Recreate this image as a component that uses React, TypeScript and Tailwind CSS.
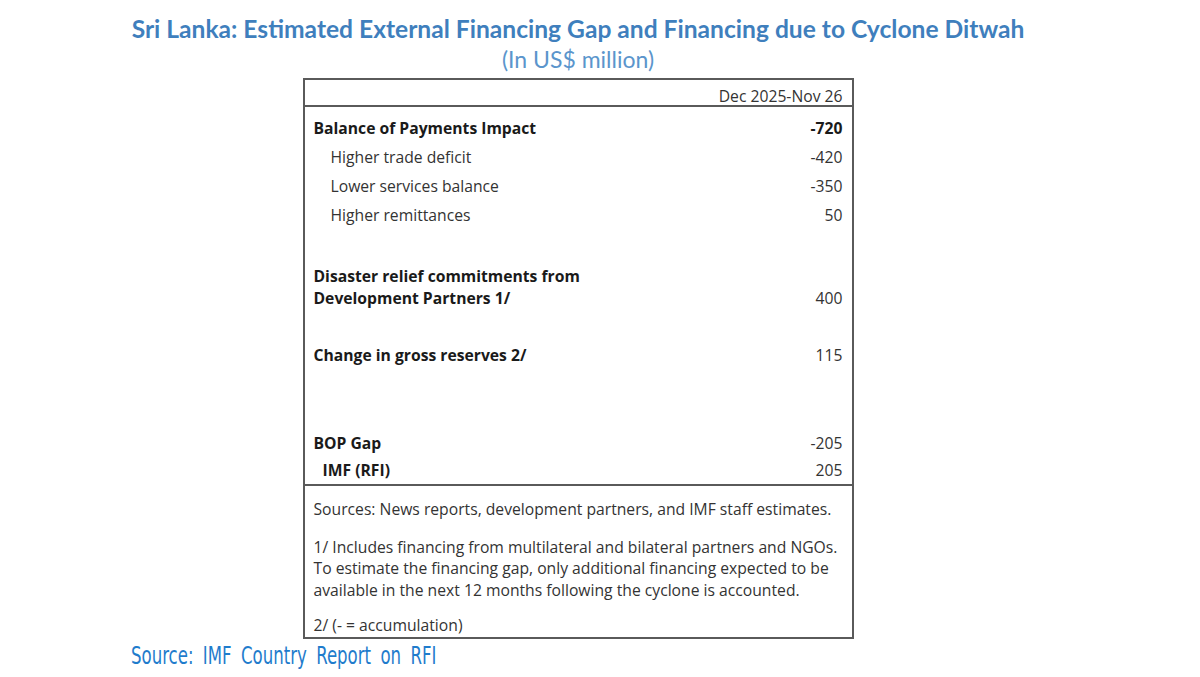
const rows = [
  { label: "Higher trade deficit", value: "-420" },
  { label: "Lower services balance", value: "-350" },
  { label: "Higher remittances", value: "50" },
];

const bodyFont = { fontFamily: '"Open Sans", "Noto Sans", sans-serif' };
const titleFont = { fontFamily: 'Lato, "Liberation Sans", sans-serif' };

export default function App() {
  return (
    <div className="w-[1200px] h-[677px] bg-white overflow-hidden relative">
      <div className="w-[1156px] flex flex-col items-center">
        <h1 className="mt-[13px] text-[24.6px] leading-[31px] font-bold text-[#3f7fbd] whitespace-nowrap" style={titleFont}>
          Sri Lanka: Estimated External Financing Gap and Financing due to Cyclone Ditwah
        </h1>
        <p className="text-[23px] leading-[30px] text-[#5b95cc]" style={titleFont}>
          (In US$ million)
        </p>

        <div
          className="mt-[4px] w-[551px] h-[561px] border-2 border-[#5a5a5a] flex flex-col text-[15.7px] text-[#1a1a1a]"
          style={bodyFont}
        >
          <div className="h-[27px] border-b-2 border-[#5a5a5a] flex items-end justify-end pr-[9px] leading-[18px] text-[#333]">
            Dec 2025-Nov 26
          </div>

          <div className="mt-[7px] px-[9px]">
            <div className="h-[29px] flex items-center justify-between font-bold">
              <span>Balance of Payments Impact</span>
              <span>-720</span>
            </div>
            {rows.map((r) => (
              <div key={r.label} className="h-[29px] flex items-center justify-between text-[#333]">
                <span className="pl-[17px]">{r.label}</span>
                <span>{r.value}</span>
              </div>
            ))}

            <div className="mt-[35px] flex items-end justify-between leading-[22px]">
              <span className="font-bold">
                Disaster relief commitments from
                <br />
                Development Partners 1/
              </span>
              <span className="text-[#333]">400</span>
            </div>

            <div className="mt-[36px] h-[22px] flex items-center justify-between">
              <span className="font-bold">Change in gross reserves 2/</span>
              <span className="text-[#333]">115</span>
            </div>

            <div className="mt-[63px] h-[27px] flex items-center justify-between">
              <span className="font-bold">BOP Gap</span>
              <span className="text-[#333]">-205</span>
            </div>
            <div className="h-[27px] flex items-center justify-between">
              <span className="font-bold pl-[9px]">IMF (RFI)</span>
              <span className="text-[#333]">205</span>
            </div>
          </div>

          <div className="border-t-2 border-[#5a5a5a] px-[9px] pt-[13px] leading-[21.5px] text-[#333] whitespace-nowrap">
            <p>Sources: News reports, development partners, and IMF staff estimates.</p>
            <p className="mt-[16px]">
              1/ Includes financing from multilateral and bilateral partners and NGOs.
              <br />
              To estimate the financing gap, only additional financing expected to be
              <br />
              available in the next 12 months following the cyclone is accounted.
            </p>
            <p className="mt-[14px]">2/ (- = accumulation)</p>
          </div>
        </div>
      </div>

      <p className="ml-[131px] mt-[1px] h-[30px] leading-[32px] whitespace-nowrap">
        <span
          className="inline-block origin-left scale-x-[0.69] text-[24px] text-[#1f7ccc] [word-spacing:6px]"
          style={{ fontFamily: '"DejaVu Sans", sans-serif' }}
        >
          Source: IMF Country Report on RFI
        </span>
      </p>
    </div>
  );
}
